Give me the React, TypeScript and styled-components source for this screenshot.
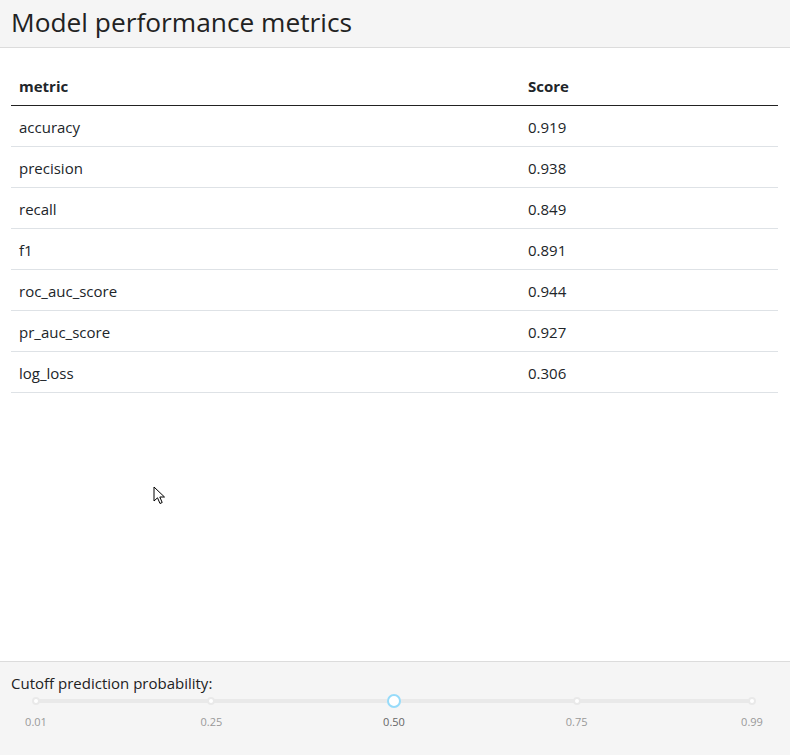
import React from "react";
import styled, { createGlobalStyle } from "styled-components";

const Global = createGlobalStyle`
  html, body { margin: 0; padding: 0; background: #fff; }
  body { font-family: "Open Sans", "Noto Sans", sans-serif; color: #212529; }
`;

const Page = styled.div`
  position: relative;
  display: flex;
  flex-direction: column;
  min-height: 755px;
`;

const Header = styled.header`
  height: 48px;
  box-sizing: border-box;
  background: #f5f5f5;
  border-bottom: 1px solid #dcdcdc;
  display: flex;
  align-items: center;
  padding: 0 11px 3px;
`;

const Title = styled.h1`
  margin: 0;
  font-size: 26.3px;
  font-weight: 400;
  color: #222;
`;

const Main = styled.main`
  flex: 1;
  padding: 18px 12px 0 11px;
`;

const Table = styled.table`
  width: 100%;
  border-collapse: collapse;
  table-layout: fixed;
  font-size: 15px;
`;

const Col = styled.col<{ $w?: string }>`
  width: ${(p) => p.$w || "auto"};
`;

const HeadCell = styled.th`
  text-align: left;
  font-weight: 700;
  height: 39px;
  padding: 0 8px;
  border-bottom: 1px solid #222;
`;

const Cell = styled.td`
  height: 39px;
  padding: 1px 8px 0;
  border-bottom: 1px solid #dee2e6;
`;

const Footer = styled.footer`
  height: 94px;
  box-sizing: border-box;
  background: #f5f5f5;
  border-top: 1px solid #dcdcdc;
  padding: 10px 13px 0 11px;
`;

const Label = styled.div`
  font-size: 15px;
  color: #222;
  line-height: 22px;
`;

const Slider = styled.div`
  position: relative;
  margin: 0 25px;
  height: 34px;
`;

const Rail = styled.div`
  position: absolute;
  left: 0;
  right: 0;
  top: 5px;
  height: 4px;
  border-radius: 2px;
  background: #e9e9e9;
`;

const Dot = styled.span`
  position: absolute;
  top: 3px;
  width: 8px;
  height: 8px;
  box-sizing: border-box;
  margin-left: -4px;
  border: 2px solid #e9e9e9;
  border-radius: 50%;
  background: #fff;
`;

const Handle = styled.span`
  position: absolute;
  top: 0;
  width: 14px;
  height: 14px;
  box-sizing: border-box;
  margin-left: -7px;
  border: 2px solid #96dbfa;
  border-radius: 50%;
  background: #fff;
`;

const Mark = styled.span<{ $active?: boolean }>`
  position: absolute;
  top: 20px;
  transform: translateX(-50%);
  font-size: 11px;
  color: ${(p) => (p.$active ? "#666" : "#999")};
`;

const Cursor = styled.svg`
  position: absolute;
  left: 153px;
  top: 486px;
`;

const rows: [string, string][] = [
  ["accuracy", "0.919"],
  ["precision", "0.938"],
  ["recall", "0.849"],
  ["f1", "0.891"],
  ["roc_auc_score", "0.944"],
  ["pr_auc_score", "0.927"],
  ["log_loss", "0.306"],
];

const marks = [0.01, 0.25, 0.5, 0.75, 0.99];
const pct = (v: number) => `${((v - 0.01) / 0.98) * 100}%`;

export default function App() {
  return (
    <Page>
      <Global />
      <Header>
        <Title>Model performance metrics</Title>
      </Header>
      <Main>
        <Table>
          <colgroup>
            <Col $w="509px" />
            <Col />
          </colgroup>
          <thead>
            <tr>
              <HeadCell>metric</HeadCell>
              <HeadCell>Score</HeadCell>
            </tr>
          </thead>
          <tbody>
            {rows.map(([m, s]) => (
              <tr key={m}>
                <Cell>{m}</Cell>
                <Cell>{s}</Cell>
              </tr>
            ))}
          </tbody>
        </Table>
      </Main>
      <Footer>
        <Label>Cutoff prediction probability:</Label>
        <Slider>
          <Rail />
          {marks.map((v) =>
            v === 0.5 ? null : <Dot key={v} style={{ left: pct(v) }} />
          )}
          <Handle style={{ left: pct(0.5) }} />
          {marks.map((v) => (
            <Mark key={v} $active={v === 0.5} style={{ left: pct(v) }}>
              {v.toFixed(2)}
            </Mark>
          ))}
        </Slider>
      </Footer>
      <Cursor width="13" height="20" viewBox="0 0 13 20">
        <path
          d="M1 1 L1 15 L4.5 11.8 L7 17.5 L9.2 16.5 L6.8 11 L11.5 11 Z"
          fill="#fff"
          stroke="#000"
          strokeWidth="1"
          strokeLinejoin="round"
        />
      </Cursor>
    </Page>
  );
}
